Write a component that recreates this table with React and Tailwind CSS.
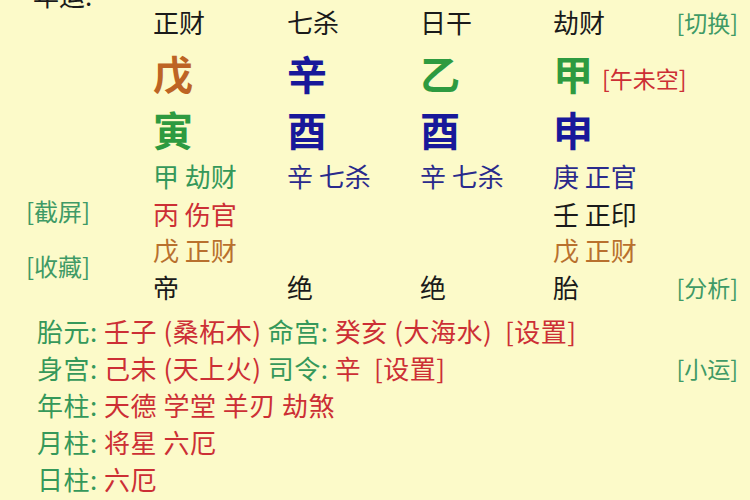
export default function App() {
  const font = { fontFamily: '"Noto Sans CJK SC", "Noto Sans", sans-serif' };
  const G = "text-[#35985a]";
  const R = "text-[#cc2f35]";
  const B = "text-[#18189a]";
  const O = "text-[#b8702e]";
  const K = "text-[#1a1a1a]";
  const L = "text-[#3f9a66]";
  const big = "flex items-center text-[40px] leading-[50px] font-bold";
  const cell = "flex items-center text-[26px] whitespace-pre";
  return (
    <div
      className="w-[750px] h-[500px] overflow-hidden bg-[#fcfac9] text-[24px]"
      style={font}
    >
      <div className="grid grid-cols-[153px_134px_133px_133px_1fr_auto] grid-rows-[44px_58px_54px_40px_36px_36px_38px] leading-[36px]">
        {/* row 1 */}
        <div className="flex items-start pl-[33px]">
          <span className={`${K} leading-[24px] -mt-[17px] text-[26px]`}>年运:</span>
        </div>
        <div className={`${cell} ${K}`}>正财</div>
        <div className={`${cell} ${K}`}>七杀</div>
        <div className={`${cell} ${K}`}>日干</div>
        <div className={`${cell} ${K}`}>劫财</div>
        <div className={`flex items-center justify-end pr-[12px] ${L} text-[23px]`}>[切换]</div>

        {/* row 2 stems */}
        <div />
        <div className={`${big} text-[#bd6424]`}>戊</div>
        <div className={`${big} ${B}`}>辛</div>
        <div className={`${big} text-[#2e9a40]`}>乙</div>
        <div className="col-span-2 flex items-center">
          <span className="text-[40px] leading-[50px] font-bold text-[#2e9a40]">甲</span>
          <span className={`${R} text-[23px] ml-[9px] mt-[10px]`}>[午未空]</span>
        </div>

        {/* row 3 branches */}
        <div />
        <div className={`${big} text-[#2e9a40]`}>寅</div>
        <div className={`${big} ${B}`}>酉</div>
        <div className={`${big} ${B}`}>酉</div>
        <div className={`${big} ${B}`}>申</div>
        <div />

        {/* left links column spanning rows 4-7 */}
        <div className="row-span-4 flex flex-col pl-[26px] pt-[37px] gap-[19px]">
          <span className={`${L} text-[24px] leading-[36px]`}>[截屏]</span>
          <span className={`${L} text-[24px] leading-[36px]`}>[收藏]</span>
        </div>

        {/* row 4 */}
        <div className={`${cell} ${G}`}>甲 劫财</div>
        <div className={`${cell} text-[#2a2a8c]`}>辛 七杀</div>
        <div className={`${cell} text-[#2a2a8c]`}>辛 七杀</div>
        <div className={`${cell} text-[#2a2a8c]`}>庚 正官</div>
        <div />

        {/* row 5 */}
        <div className={`${cell} ${R}`}>丙 伤官</div>
        <div />
        <div />
        <div className={`${cell} ${K}`}>壬 正印</div>
        <div />

        {/* row 6 */}
        <div className={`${cell} ${O}`}>戊 正财</div>
        <div />
        <div />
        <div className={`${cell} ${O}`}>戊 正财</div>
        <div />

        {/* row 7 */}
        <div className={`${cell} ${K}`}>帝</div>
        <div className={`${cell} ${K}`}>绝</div>
        <div className={`${cell} ${K}`}>绝</div>
        <div className={`${cell} ${K}`}>胎</div>
        <div className={`flex items-center justify-end pr-[12px] ${L} text-[23px]`}>[分析]</div>
      </div>

      <div className="flex flex-col pl-[37px] pt-[6px] text-[26px] tracking-[0.5px] leading-[36px] whitespace-pre">
        <div className="h-[37px] flex items-center">
          <span className={G}>胎元: </span>
          <span className={R}>壬子 (桑柘木) </span>
          <span className={G}>命宫: </span>
          <span className={R}>癸亥 (大海水)  [设置]</span>
        </div>
        <div className="h-[37px] flex items-center justify-between pr-[12px]">
          <div>
            <span className={G}>身宫: </span>
            <span className={R}>己未 (天上火) </span>
            <span className={G}>司令: </span>
            <span className={R}>辛  [设置]</span>
          </div>
          <span className={`${L} text-[23px] tracking-normal`}>[小运]</span>
        </div>
        <div className="h-[37px] flex items-center">
          <span className={G}>年柱: </span>
          <span className={R}>天德 学堂 羊刃 劫煞</span>
        </div>
        <div className="h-[37px] flex items-center">
          <span className={G}>月柱: </span>
          <span className={R}>将星 六厄</span>
        </div>
        <div className="h-[37px] flex items-center">
          <span className={G}>日柱: </span>
          <span className={R}>六厄</span>
        </div>
      </div>
    </div>
  );
}
